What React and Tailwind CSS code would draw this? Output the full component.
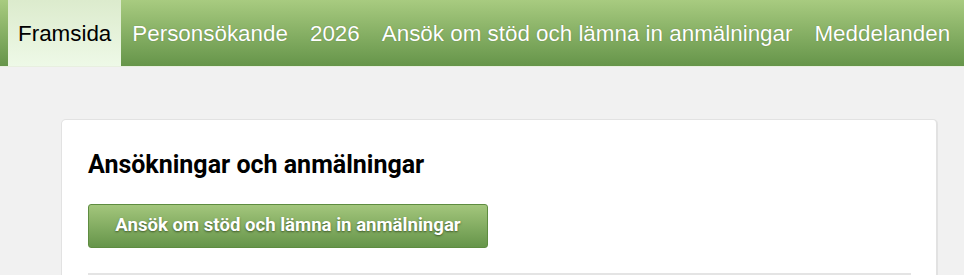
import React from 'react';

const navItems = ['Personsökande', '2026', 'Ansök om stöd och lämna in anmälningar', 'Meddelanden'];

export default function App() {
  return (
    <div className="min-h-screen bg-[#f1f1f1]">
      {/* Top navigation */}
      <nav className="flex h-[67px] items-stretch border-b border-[#e8efe0] bg-gradient-to-b from-[#a8cb80] to-[#66954a] pl-2 font-['Liberation_Sans',Arial,sans-serif] text-[22.4px]">
        <a className="flex items-center bg-gradient-to-b from-[#dcebcd] to-[#eef9e7] px-[10px] pt-[1px] text-black">
          Framsida
        </a>
        {navItems.map((item) => (
          <a
            key={item}
            className="flex items-center px-[11px] pt-[1px] text-white [text-shadow:0_0_1px_rgba(60,80,30,0.6)]"
          >
            {item}
          </a>
        ))}
      </nav>

      {/* Content */}
      <div className="pl-[61px] pr-[26px] pt-[52px]">
        <div className="h-[200px] rounded-t-[5px] border border-r-2 border-[#e2e2e2] bg-white px-[26px] pt-[26px] font-['Roboto',sans-serif]">
          <h2 className="text-[25px] font-bold leading-[37px] text-black">Ansökningar och anmälningar</h2>
          <button className="mt-[21px] flex h-[44px] w-[400px] items-center justify-center rounded-[3px] border border-[#5e8c40] bg-gradient-to-b from-[#a3c67c] to-[#66954a] text-[18.6px] font-bold text-white [text-shadow:0_1px_2px_rgba(40,60,20,0.7)]">
            Ansök om stöd och lämna in anmälningar
          </button>
          <div className="mr-[-1px] mt-[25px] border-t-2 border-[#e4e4e4]" />
        </div>
      </div>
    </div>
  );
}
